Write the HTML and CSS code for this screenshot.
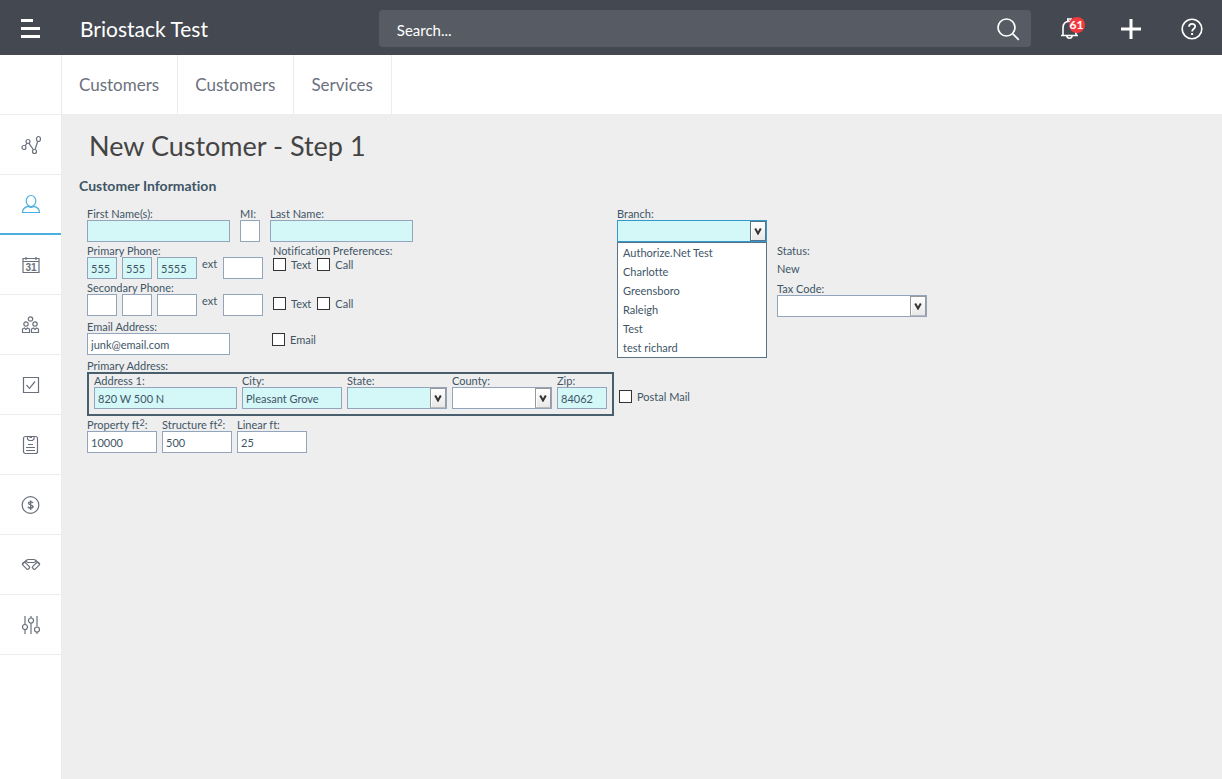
FILE: index.html
```html
<!DOCTYPE html>
<html lang="en">
<head>
<meta charset="utf-8">
<title>New Customer - Step 1</title>
<link rel="stylesheet" href="styles.css">
</head>
<body>
<header class="topbar">
  <div class="brand">
    <button class="icon-btn" aria-label="Menu"><svg width="20" height="20" viewBox="0 0 20 20" fill="#fff"><path d="M0 0h12v3H0zM0 8h19v3H0zM0 16h19v3H0z"/></svg></button>
    <span class="brand-name">Briostack Test</span>
  </div>
  <div class="search">
    <input class="search-input" type="text" placeholder="Search..." aria-label="Search">
    <button class="search-btn" aria-label="Run search"><svg width="24" height="24" viewBox="0 0 24 24" fill="none" stroke="#fff" stroke-width="1.7"><circle cx="10.5" cy="10.5" r="8.5"/><path d="M16.8 16.8l6 6"/></svg></button>
  </div>
  <nav class="actions" aria-label="Tools">
    <button class="icon-btn" aria-label="Notifications"><span class="bell"><svg width="20" height="22" viewBox="0 0 20 22" fill="none" stroke="#fff" stroke-width="1.6"><path d="M1 17.5h17M3 17.5V10C3 5.5 5.5 3.2 9.5 3.2S16 5.500 16 10v7.500M7.800 3V1h3.400v2M7 18c0 3 5 3 5 0"/></svg><span class="badge">61</span></span></button>
    <button class="icon-btn" aria-label="Add"><svg width="20" height="20" viewBox="0 0 20 20" fill="#fff"><path d="M8.500 0h3v8.500H20v3h-8.500V20h-3v-8.500H0v-3h8.500z"/></svg></button>
    <button class="icon-btn" aria-label="Help"><svg width="22" height="22" viewBox="0 0 22 22" fill="none" stroke="#fff" stroke-width="1.6"><circle cx="11" cy="11" r="9.800"/><path d="M8 8.800c0-4 6.200-3.800 6.200-.3 0 2.300-3.100 2.300-3.100 5" stroke-width="1.800"/><path d="M11.100 15v2" stroke-width="2"/></svg></button>
  </nav>
</header>
<div class="shell">
  <nav class="sidebar" aria-label="Main">
    <span class="side-item"></span>
    <a class="side-item" href="#" aria-label="Dashboard"><svg width="20" height="20" viewBox="0 0 20 20"><circle cx="3" cy="12.500" r="2"/><circle cx="7" cy="6.500" r="2"/><circle cx="13.500" cy="16.500" r="2"/><ellipse cx="17.500" cy="4" rx="2" ry="2.500"/><path d="M4 10.800l2-2.600M8 8.300l4.500 6.500M14.100 14.500l2.600-8.200"/></svg></a>
    <a class="side-item active" href="#" aria-label="Customers"><svg width="20" height="20" viewBox="0 0 20 20"><ellipse cx="10" cy="7" rx="4.800" ry="5.500"/><path d="M7.500 12.300c-4 .7-6 2.700-6 6.200h17c0-3.500-2-5.500-6-6.200-1.500 1.300-3.500 1.300-5 0z"/></svg></a>
    <a class="side-item" href="#" aria-label="Calendar"><svg width="20" height="20" viewBox="0 0 20 20"><path d="M2 3.500h16v14H2zM2 6.500h16M5 2v3M15 2v3"/><text x="10" y="16" text-anchor="middle" class="icon-text">31</text></svg></a>
    <a class="side-item" href="#" aria-label="Team"><svg width="20" height="20" viewBox="0 0 20 20"><circle cx="9.500" cy="4" r="2.200"/><circle cx="5" cy="9" r="2.200"/><circle cx="14" cy="9" r="2.200"/><path d="M1.500 17.500V14l2-1L5 14.500 6.500 13l2 1v3.500zM10.500 17.500V14l2-1 1.500 1.500 1.500-1.500 2 1v3.500z"/></svg></a>
    <a class="side-item" href="#" aria-label="Tasks"><svg width="20" height="20" viewBox="0 0 20 20"><path d="M2.500 2.500h15v15h-15z"/><path d="M5.500 10l3 3.300 5.500-6.800"/></svg></a>
    <a class="side-item" href="#" aria-label="Reports"><svg width="20" height="20" viewBox="0 0 20 20"><rect x="2.500" y="1.500" width="14" height="17" rx="2"/><path d="M6.500 1.500v2.500l1.500 1.500h3.500l1.500-1.500V1.500M8.500 2.500h2.500M7 9.500h5M5 12.500h9M5 15.500h9"/></svg></a>
    <a class="side-item" href="#" aria-label="Billing"><svg width="20" height="20" viewBox="0 0 20 20"><circle cx="9.500" cy="10" r="8.300"/><path d="M12 8c-.5-1.600-4.500-1.600-4.500.3 0 2 4.500 1 4.500 3.200 0 2-4.500 2-5 .2M9.700 5.500v9.500" stroke-width="1.400"/></svg></a>
    <a class="side-item" href="#" aria-label="Partners"><svg width="20" height="20" viewBox="0 0 20 20"><rect x="5.500" y="4.500" width="9" height="3" rx="1.500"/><rect x="1" y="9" width="8" height="3.500" rx="1" transform="rotate(45 5 10.750)"/><rect x="11" y="9" width="8" height="3.500" rx="1" transform="rotate(-45 15 10.750)"/><path d="M5.500 5L1.800 9M14.500 5l3.700 4"/></svg></a>
    <a class="side-item" href="#" aria-label="Settings"><svg width="20" height="20" viewBox="0 0 20 20"><path d="M4 1v8.500M4 14.500V19M10 1v2M10 8v11M16 1v10.500M16 17v2"/><circle cx="4" cy="12" r="2.500"/><circle cx="10" cy="5.500" r="2.500"/><circle cx="16" cy="14.500" r="2.500"/></svg></a>
  </nav>
  <div class="content">
    <nav class="tabs" aria-label="Sections">
      <a class="tab" href="#">Customers</a>
      <a class="tab" href="#">Customers</a>
      <a class="tab" href="#">Services</a>
    </nav>
    <main class="page">
      <h1 class="page-title">New Customer - Step 1</h1>
      <h2 class="section-title">Customer Information</h2>
      <form class="form">
        <div class="columns">
          <div class="contact">
            <div class="row row-wide">
              <div class="field w-name"><label for="first">First Name(s):</label><input class="box required" id="first" type="text"></div>
              <div class="field w-mi"><label for="mi">MI:</label><input class="box" id="mi" type="text"></div>
              <div class="field w-name"><label for="last">Last Name:</label><input class="box required" id="last" type="text"></div>
            </div>
            <div class="row row-wide">
              <div class="field">
                <label for="p1">Primary Phone:</label>
                <div class="row">
                  <input class="box required w-area" id="p1" type="text" value="555" aria-label="Primary area code">
                  <input class="box required w-area" type="text" value="555" aria-label="Primary prefix">
                  <input class="box required w-line" type="text" value="5555" aria-label="Primary line number">
                  <label class="ext" for="p-ext">ext</label>
                  <input class="box w-line" id="p-ext" type="text">
                </div>
              </div>
              <div class="field">
                <span>Notification Preferences:</span>
                <div class="checks">
                  <label class="check"><input type="checkbox">Text</label>
                  <label class="check"><input type="checkbox">Call</label>
                </div>
              </div>
            </div>
            <div class="row row-wide">
              <div class="field">
                <label for="s1">Secondary Phone:</label>
                <div class="row">
                  <input class="box w-area" id="s1" type="text" aria-label="Secondary area code">
                  <input class="box w-area" type="text" aria-label="Secondary prefix">
                  <input class="box w-line" type="text" aria-label="Secondary line number">
                  <label class="ext" for="s-ext">ext</label>
                  <input class="box w-line" id="s-ext" type="text">
                </div>
              </div>
              <div class="checks checks-second">
                <label class="check"><input type="checkbox">Text</label>
                <label class="check"><input type="checkbox">Call</label>
              </div>
            </div>
            <div class="row email-row">
              <div class="field w-name"><label for="email">Email Address:</label><input class="box" id="email" type="text" value="junk@email.com"></div>
              <label class="check"><input type="checkbox">Email</label>
            </div>
          </div>
          <div class="branch">
            <div class="field">
              <label for="branch">Branch:</label>
              <div class="combo open">
                <select class="box required" id="branch"><option></option></select>
                <span class="arrow"><svg width="8" height="7" viewBox="0 0 8 7"><path d="M1.200.5L4 5.500 6.800.5"/></svg></span>
                <ul class="menu">
                  <li>Authorize.Net Test</li>
                  <li>Charlotte</li>
                  <li>Greensboro</li>
                  <li>Raleigh</li>
                  <li>Test</li>
                  <li>test richard</li>
                </ul>
              </div>
            </div>
          </div>
          <div class="status">
            <span>Status:</span>
            <span>New</span>
            <div class="field">
              <label for="tax">Tax Code:</label>
              <div class="combo"><select class="box" id="tax"><option></option></select><span class="arrow"><svg width="8" height="7" viewBox="0 0 8 7"><path d="M1.200.5L4 5.500 6.800.5"/></svg></span></div>
            </div>
          </div>
        </div>
        <div class="field address">
          <span>Primary Address:</span>
          <div class="row address-row">
            <div class="row address-box">
              <div class="field w-name"><label for="addr">Address 1:</label><input class="box required" id="addr" type="text" value="820 W 500 N"></div>
              <div class="field w-city"><label for="city">City:</label><input class="box required" id="city" type="text" value="Pleasant Grove"></div>
              <div class="field w-city"><label for="state">State:</label>
                <div class="combo"><select class="box required" id="state"><option></option></select><span class="arrow"><svg width="8" height="7" viewBox="0 0 8 7"><path d="M1.200.5L4 5.500 6.800.5"/></svg></span></div></div>
              <div class="field w-city"><label for="county">County:</label>
                <div class="combo"><select class="box" id="county"><option></option></select><span class="arrow"><svg width="8" height="7" viewBox="0 0 8 7"><path d="M1.200.5L4 5.500 6.800.5"/></svg></span></div></div>
              <div class="field w-zip"><label for="zip">Zip:</label><input class="box required" id="zip" type="text" value="84062"></div>
            </div>
            <label class="check postal"><input type="checkbox">Postal Mail</label>
          </div>
        </div>
        <div class="row sizes">
          <div class="field w-size"><label for="prop">Property ft<sup>2</sup>:</label><input class="box" id="prop" type="text" value="10000"></div>
          <div class="field w-size"><label for="struct">Structure ft<sup>2</sup>:</label><input class="box" id="struct" type="text" value="500"></div>
          <div class="field w-size"><label for="linear">Linear ft:</label><input class="box" id="linear" type="text" value="25"></div>
        </div>
      </form>
    </main>
  </div>
</div>
</body>
</html>
```
FILE: styles.css
```css
* { box-sizing: border-box; }
body {
  margin: 0;
  min-height: 100vh;
  display: flex;
  flex-direction: column;
  background: #eee;
  color: #3e5566;
  font: 11px/13px Lato, sans-serif;
  font-variant-ligatures: none;
}
button { padding: 0; border: 0; background: none; font: inherit; cursor: pointer; }
svg { display: block; }

.topbar { display: flex; align-items: center; height: 55px; background: #444851; color: #fff; }
.brand { display: flex; align-items: center; width: 31%; padding-top: 2px; }
.brand-name { padding-left: 19px; font-size: 21px; line-height: 26px; }
.icon-btn { display: flex; align-items: center; justify-content: center; width: 61px; height: 55px; color: #fff; }
.search { flex: 1; display: flex; height: 37px; margin-top: 2px; background: #575b63; border-radius: 4px; }
.search-input {
  flex: 1; min-width: 0; padding: 3px 18px 0; border: 0; outline: 0;
  background: none; color: #fff; font: 15px Lato, sans-serif;
}
.search-input::placeholder { color: #fff; opacity: 1; }
.search-btn { width: 46px; display: flex; align-items: center; justify-content: center; }
.actions { display: flex; padding-left: 8px; padding-top: 2px; }
.bell { position: relative; }
.badge {
  position: absolute; top: -1px; left: 9px; width: 16px; height: 16px;
  border-radius: 50%; background: #f43a3f; font-size: 12px; font-weight: bold; line-height: 16px;
}

.shell { flex: 1; display: flex; }
.sidebar { width: 62px; background: #fff; border-right: 1px solid #ececec; }
.side-item { display: flex; align-items: center; justify-content: center; height: 60px; border-bottom: 1px solid #ececec; }
.side-item svg { fill: none; stroke: #6b717c; stroke-width: 1.2; }
.side-item.active { border-bottom: 2px solid #4aaee0; }
.side-item.active svg { stroke: #4aaee0; }
.side-item .icon-text { fill: #6b717c; stroke: none; font: bold 10px "Liberation Sans", sans-serif; }

.content { flex: 1; min-width: 0; }
.tabs { display: flex; height: 59px; background: #fff; }
.tab {
  padding: 0 18px 0 17px; border-right: 1px solid #ececec;
  color: #6b717c; font-size: 17px; line-height: 59px; text-decoration: none;
}
.page { padding: 14px 17px; }
.page-title { margin: 0 0 14px 10px; color: #444; font-size: 27px; font-weight: 400; line-height: 35px; }
.section-title { margin: 0 0 12px; font-size: 14px; line-height: 18px; }

.form { padding-left: 8px; }
.columns { display: flex; }
.contact { width: 530px; display: flex; flex-direction: column; gap: 2px; }
.row { display: flex; gap: 5px; }
.row-wide { gap: 10px; }
.field { display: flex; flex-direction: column; }
.box {
  width: 100%; height: 22px; padding: 1px 3px 0; border: 1px solid #93a4bd; border-radius: 0; outline: 0;
  background: #fff; color: #3e5566; font: 11px Lato, sans-serif; appearance: none;
}
.required { background: #d4f7f7; }
.w-name { width: 143px; }
.w-mi { width: 20px; }
.w-area { width: 30px; }
.w-line { width: 40px; }
.w-city { width: 100px; }
.w-zip { width: 50px; }
.w-size { width: 70px; }
.ext { width: 16px; }

.checks { display: flex; gap: 6px; }
.checks-second { padding-top: 15px; }
.check { display: flex; align-items: center; align-self: flex-start; gap: 5px; line-height: 15px; }
.check input { appearance: none; width: 13px; height: 13px; margin: 0; border: 1px solid #333; background: #fff; }
.email-row { gap: 42px; padding-top: 2px; }
.email-row .check { padding-top: 12px; }

.branch { width: 150px; }
.combo { position: relative; }
.arrow {
  position: absolute; top: 1px; right: 1px; width: 16px; height: 20px;
  display: flex; align-items: center; justify-content: center;
  border: 1px solid #999; border-bottom-color: #bbb;
  background: linear-gradient(#fff, #e8e8e8); box-shadow: inset 1px 1px #fff; pointer-events: none;
}
.arrow path { fill: none; stroke: #333; stroke-width: 2; }
.open .box { border-color: #3399cc; }
.open .arrow { border-color: #58748a; }
.menu {
  position: absolute; top: 22px; left: 0; right: 0; margin: 0; padding: 0;
  border: 1px solid #5b7386; background: #fff; list-style: none;
}
.menu li { padding-left: 5px; line-height: 19px; }
.status { width: 150px; margin-left: 10px; padding-top: 37px; display: flex; flex-direction: column; gap: 5px; }
.status .field { padding-top: 2px; }

.address { padding-top: 4px; }
.address-box { padding: 0 5px 5px; border: 2px solid #4a5f6d; }
.postal { padding-top: 17px; }
.sizes { padding-top: 2px; }
sup { font-size: 9px; line-height: 0; vertical-align: 3px; }
```
